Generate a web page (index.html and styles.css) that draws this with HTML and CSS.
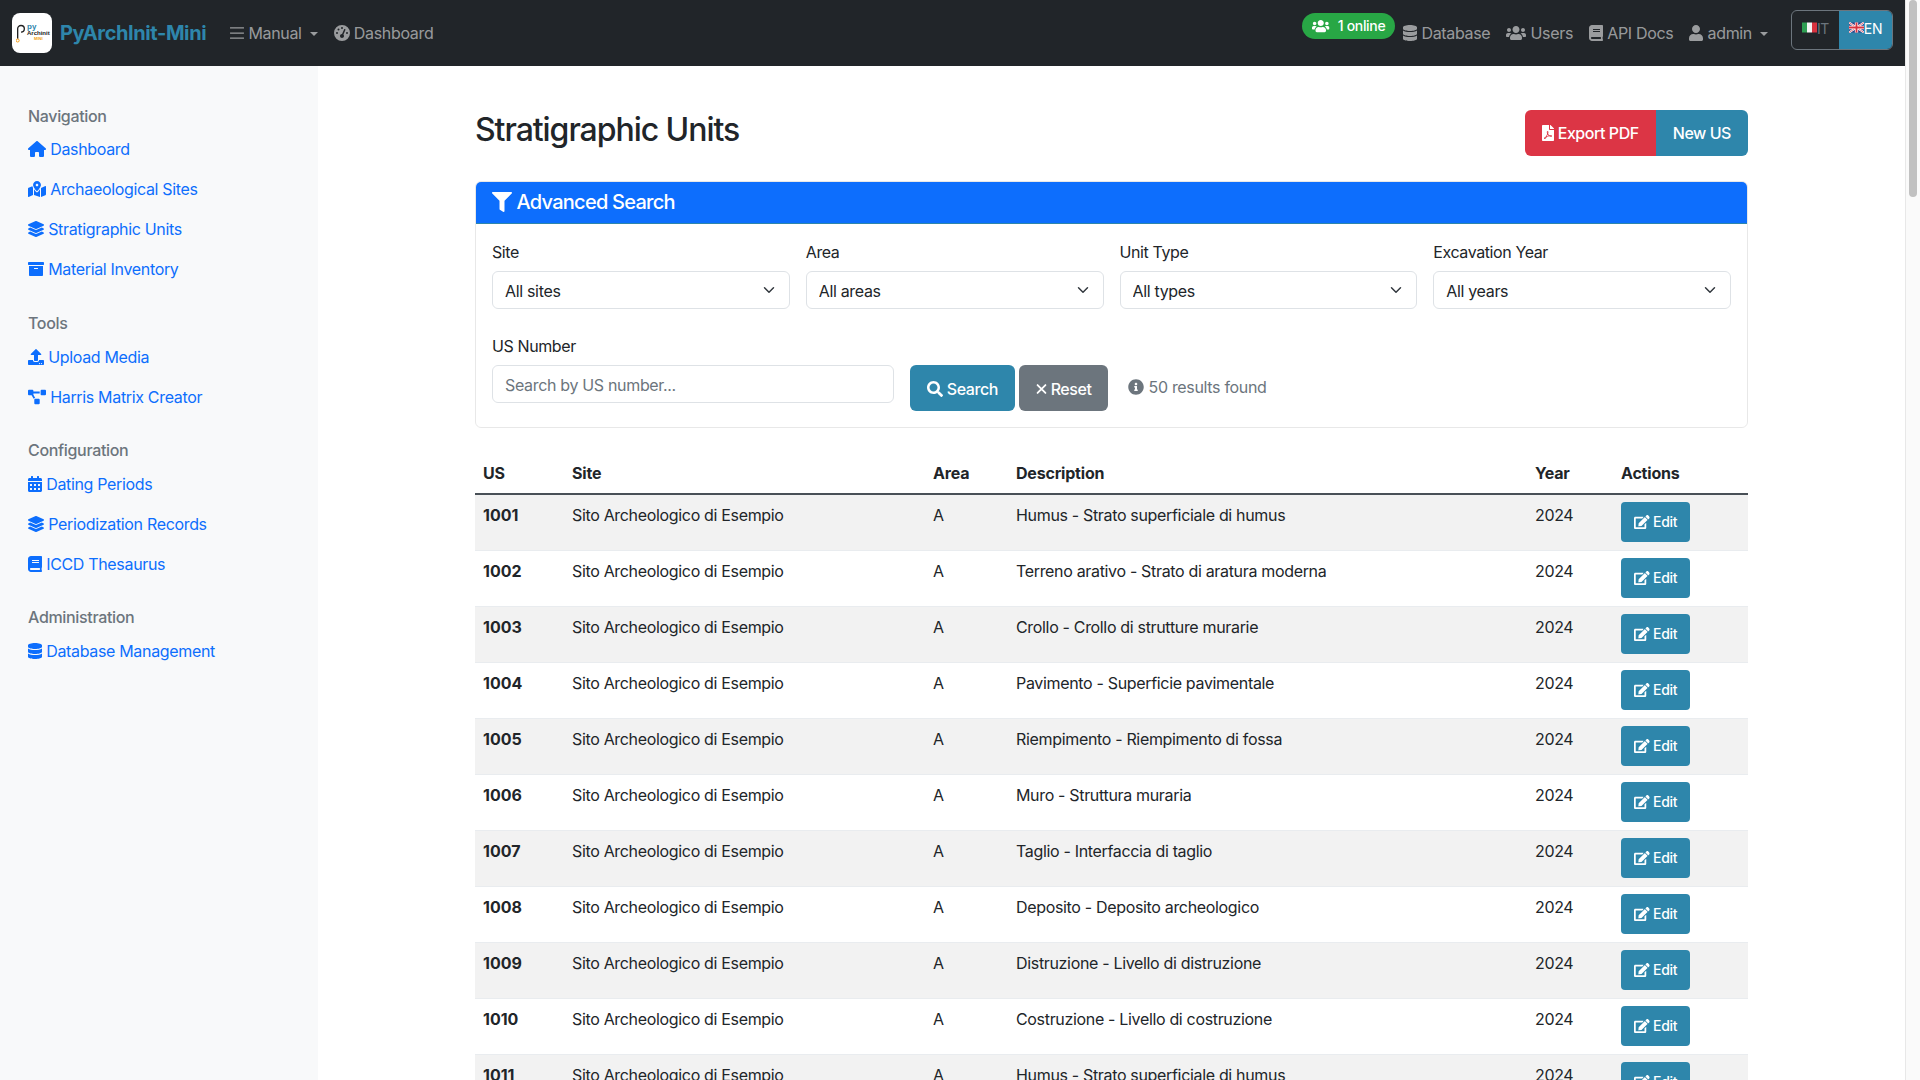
FILE: index.html
```html
<!DOCTYPE html>
<html lang="en">
<head>
    <meta charset="UTF-8">
    <meta name="viewport" content="width=device-width, initial-scale=1.0">
    <title>Stratigraphic Units - PyArchInit-Mini</title>
    <link rel="stylesheet" href="styles.css">
</head>
<body>
<svg class="sprite" xmlns="http://www.w3.org/2000/svg">
    <symbol id="i-home" viewBox="0 0 576 512"><path d="M575.8 255.5c0 18-15 32.1-32 32.1h-32l.7 160.2c0 2.7-.2 5.4-.5 8.1V472c0 22.1-17.9 40-40 40H456c-1.1 0-2.2 0-3.3-.1c-1.4 .1-2.8 .1-4.2 .1H416 392c-22.1 0-40-17.9-40-40V448 384c0-17.7-14.3-32-32-32H256c-17.7 0-32 14.3-32 32v64 24c0 22.1-17.9 40-40 40H160 128.1c-1.5 0-3-.1-4.5-.2c-1.2 .1-2.4 .2-3.6 .2H104c-22.1 0-40-17.9-40-40V360c0-.9 0-1.9 .1-2.8V287.6H32c-18 0-32-14-32-32.1c0-9 3-17 10-24L266.4 8c7-7 15-8 22-8s15 2 21 7L564.8 231.5c8 7 12 15 11 24z"/></symbol>
    <symbol id="i-map" viewBox="0 0 576 512"><path d="M288 0c-69.59 0-126 56.41-126 126 0 56.26 82.35 158.8 113.9 196.02 6.39 7.54 17.82 7.54 24.2 0C331.65 284.8 414 182.26 414 126 414 56.41 357.59 0 288 0zm0 168c-23.2 0-42-18.8-42-42s18.8-42 42-42 42 18.8 42 42-18.8 42-42 42zM20.12 215.95A32.006 32.006 0 0 0 0 245.66v250.32c0 11.32 11.43 19.06 21.94 14.86L160 448V214.92c-8.84-15.98-16.07-31.54-21.25-46.42L20.12 215.95zM288 359.67c-14.07 0-27.38-6.18-36.51-16.96-19.66-23.2-40.57-49.62-59.49-76.72V448l192 64V266c-18.92 27.09-39.82 53.52-59.49 76.72-9.13 10.77-22.44 16.95-36.51 16.95zm266.06-198.51L416 224v288l139.88-55.95A31.996 31.996 0 0 0 576 426.34V176.02c0-11.32-11.43-19.06-21.94-14.86z"/></symbol>
    <symbol id="i-layers" viewBox="0 0 512 512"><path d="M12.41 148.02l232.94 105.67c6.8 3.09 14.49 3.09 21.29 0l232.94-105.67c16.55-7.51 16.55-32.52 0-40.03L266.65 2.31a25.607 25.607 0 0 0-21.29 0L12.41 107.98c-16.55 7.51-16.55 32.53 0 40.04zm487.18 88.28l-58.09-26.33-161.64 73.27c-7.56 3.43-15.59 5.17-23.86 5.17s-16.29-1.74-23.86-5.17L70.51 209.97l-58.1 26.33c-16.55 7.5-16.55 32.5 0 40l232.94 105.59c6.8 3.08 14.49 3.08 21.29 0L499.59 276.3c16.55-7.5 16.55-32.5 0-40zm0 127.8l-57.87-26.23-161.86 73.37c-7.56 3.43-15.59 5.17-23.86 5.17s-16.29-1.74-23.86-5.17L70.29 337.87 12.41 364.1c-16.55 7.5-16.55 32.5 0 40l232.94 105.59c6.8 3.08 14.49 3.08 21.29 0L499.59 404.1c16.55-7.5 16.55-32.5 0-40z"/></symbol>
    <symbol id="i-archive" viewBox="0 0 512 512"><path d="M32 448c0 17.7 14.3 32 32 32h384c17.7 0 32-14.3 32-32V160H32v288zm160-212c0-6.6 5.4-12 12-12h104c6.6 0 12 5.4 12 12v8c0 6.6-5.4 12-12 12H204c-6.6 0-12-5.4-12-12v-8zM480 32H32C14.3 32 0 46.3 0 64v48c0 8.8 7.2 16 16 16h480c8.8 0 16-7.2 16-16V64c0-17.7-14.3-32-32-32z"/></symbol>
    <symbol id="i-upload" viewBox="0 0 512 512"><path d="M296 384h-80c-13.3 0-24-10.7-24-24V192h-87.7c-17.8 0-26.7-21.5-14.1-34.1L242.3 5.7c7.5-7.5 19.8-7.5 27.3 0l152.2 152.2c12.6 12.6 3.7 34.1-14.1 34.1H320v168c0 13.3-10.7 24-24 24zm216-8v112c0 13.3-10.7 24-24 24H24c-13.3 0-24-10.7-24-24V376c0-13.3 10.7-24 24-24h136v8c0 30.9 25.1 56 56 56h80c30.9 0 56-25.1 56-56v-8h136c13.3 0 24 10.7 24 24zm-124 88c0-11-9-20-20-20s-20 9-20 20 9 20 20 20 20-9 20-20zm64 0c0-11-9-20-20-20s-20 9-20 20 9 20 20 20 20-9 20-20z"/></symbol>
    <symbol id="i-diagram" viewBox="0 0 640 512"><path d="M384 320H256c-17.67 0-32 14.33-32 32v128c0 17.67 14.33 32 32 32h128c17.67 0 32-14.33 32-32V352c0-17.67-14.33-32-32-32zM192 32c0-17.67-14.33-32-32-32H32C14.33 0 0 14.33 0 32v128c0 17.67 14.33 32 32 32h95.72l73.16 128.04C211.98 300.98 232.4 288 256 288h.28L192 175.51V128h224V64H192V32zM608 0H480c-17.67 0-32 14.33-32 32v128c0 17.67 14.33 32 32 32h128c17.67 0 32-14.33 32-32V32c0-17.67-14.33-32-32-32z"/></symbol>
    <symbol id="i-calendar" viewBox="0 0 448 512"><path d="M0 464c0 26.5 21.5 48 48 48h352c26.5 0 48-21.5 48-48V192H0v272zm320-196c0-6.6 5.4-12 12-12h40c6.6 0 12 5.4 12 12v40c0 6.6-5.4 12-12 12h-40c-6.6 0-12-5.4-12-12v-40zm0 128c0-6.6 5.4-12 12-12h40c6.6 0 12 5.4 12 12v40c0 6.6-5.4 12-12 12h-40c-6.6 0-12-5.4-12-12v-40zM192 268c0-6.6 5.4-12 12-12h40c6.6 0 12 5.4 12 12v40c0 6.6-5.4 12-12 12h-40c-6.6 0-12-5.4-12-12v-40zm0 128c0-6.6 5.4-12 12-12h40c6.6 0 12 5.4 12 12v40c0 6.6-5.4 12-12 12h-40c-6.6 0-12-5.4-12-12v-40zM64 268c0-6.6 5.4-12 12-12h40c6.6 0 12 5.4 12 12v40c0 6.6-5.4 12-12 12H76c-6.6 0-12-5.4-12-12v-40zm0 128c0-6.6 5.4-12 12-12h40c6.6 0 12 5.4 12 12v40c0 6.6-5.4 12-12 12H76c-6.6 0-12-5.4-12-12v-40zM400 64h-48V16c0-8.8-7.2-16-16-16h-32c-8.8 0-16 7.2-16 16v48H160V16c0-8.8-7.2-16-16-16h-32c-8.8 0-16 7.2-16 16v48H48C21.5 64 0 85.5 0 112v48h448v-48c0-26.5-21.5-48-48-48z"/></symbol>
    <symbol id="i-book" viewBox="0 0 448 512"><path d="M448 360V24c0-13.3-10.7-24-24-24H96C43 0 0 43 0 96v320c0 53 43 96 96 96h328c13.3 0 24-10.7 24-24v-16c0-7.5-3.5-14.3-8.9-18.7-4.2-15.4-4.2-59.3 0-74.7 5.4-4.3 8.9-11.1 8.9-18.6zM128 134c0-3.3 2.7-6 6-6h212c3.3 0 6 2.7 6 6v20c0 3.3-2.7 6-6 6H134c-3.3 0-6-2.7-6-6v-20zm0 64c0-3.3 2.7-6 6-6h212c3.3 0 6 2.7 6 6v20c0 3.3-2.7 6-6 6H134c-3.3 0-6-2.7-6-6v-20zm253.4 250H96c-17.7 0-32-14.3-32-32 0-17.6 14.4-32 32-32h285.4c-1.9 17.1-1.9 46.9 0 64z"/></symbol>
    <symbol id="i-database" viewBox="0 0 448 512"><path d="M448 73.143v45.714C448 159.143 347.667 192 224 192S0 159.143 0 118.857V73.143C0 32.857 100.333 0 224 0s224 32.857 224 73.143zM448 176v102.857C448 319.143 347.667 352 224 352S0 319.143 0 278.857V176c48.125 33.143 136.208 48.572 224 48.572S399.874 209.143 448 176zm0 160v102.857C448 479.143 347.667 512 224 512S0 479.143 0 438.857V336c48.125 33.143 136.208 48.572 224 48.572S399.874 369.143 448 336z"/></symbol>
    <symbol id="i-user" viewBox="0 0 448 512"><path d="M224 256c70.7 0 128-57.3 128-128S294.7 0 224 0 96 57.3 96 128s57.3 128 128 128zm89.6 32h-16.7c-22.2 10.2-46.9 16-72.9 16s-50.6-5.8-72.9-16h-16.7C60.2 288 0 348.2 0 422.4V464c0 26.5 21.5 48 48 48h352c26.5 0 48-21.5 48-48v-41.6c0-74.2-60.2-134.4-134.4-134.4z"/></symbol>
    <symbol id="i-users" viewBox="0 0 640 512"><path d="M96 224c35.3 0 64-28.7 64-64s-28.7-64-64-64-64 28.7-64 64 28.7 64 64 64zm448 0c35.3 0 64-28.7 64-64s-28.7-64-64-64-64 28.7-64 64 28.7 64 64 64zm32 32h-64c-17.6 0-33.5 7.1-45.1 18.6 40.3 22.1 68.9 62 75.1 109.4h66c17.7 0 32-14.3 32-32v-32c0-35.3-28.7-64-64-64zm-256 0c61.9 0 112-50.1 112-112S381.9 32 320 32 208 82.1 208 144s50.1 112 112 112zm76.8 32h-8.3c-20.8 10-43.9 16-68.5 16s-47.6-6-68.5-16h-8.3C179.6 288 128 339.6 128 403.2V432c0 26.5 21.5 48 48 48h288c26.5 0 48-21.5 48-48v-28.8c0-63.6-51.6-115.2-115.2-115.2zm-223.7-13.4C161.5 263.1 145.6 256 128 256H64c-35.3 0-64 28.7-64 64v32c0 17.7 14.3 32 32 32h65.9c6.3-47.4 34.9-87.3 75.2-109.4z"/></symbol>
    <symbol id="i-bars" viewBox="0 0 448 512"><path d="M10 72h428a10 10 0 0 1 10 10v20a10 10 0 0 1-10 10H10a10 10 0 0 1-10-10V82a10 10 0 0 1 10-10zm0 164h428a10 10 0 0 1 10 10v20a10 10 0 0 1-10 10H10a10 10 0 0 1-10-10v-20a10 10 0 0 1 10-10zm0 164h428a10 10 0 0 1 10 10v20a10 10 0 0 1-10 10H10a10 10 0 0 1-10-10v-20a10 10 0 0 1 10-10z"/></symbol>
    <symbol id="i-gauge" viewBox="0 0 512 512"><path d="M0 256a256 256 0 1 1 512 0A256 256 0 1 1 0 256zM288 96a32 32 0 1 0 -64 0 32 32 0 1 0 64 0zM256 416c35.3 0 64-28.7 64-64c0-17.4-6.9-33.1-18.1-44.6L366 161.7c5.3-12.1-.2-26.3-12.3-31.6s-26.3 .2-31.6 12.3L257.9 288c-.6 0-1.3 0-1.9 0c-35.3 0-64 28.7-64 64s28.7 64 64 64zM176 144a32 32 0 1 0 -64 0 32 32 0 1 0 64 0zM96 288a32 32 0 1 0 0-64 32 32 0 1 0 0 64zm352-32a32 32 0 1 0 -64 0 32 32 0 1 0 64 0z"/></symbol>
    <symbol id="i-filter" viewBox="0 0 512 512"><path d="M487.976 0H24.028C2.71 0-8.047 25.866 7.058 40.971L192 225.941V432c0 7.831 3.821 15.17 10.237 19.662l80 55.98C298.02 518.69 320 507.493 320 487.98V225.941l184.947-184.97C520.021 25.896 509.338 0 487.976 0z"/></symbol>
    <symbol id="i-search" viewBox="0 0 512 512"><path d="M505 442.7L405.3 343c-4.5-4.5-10.6-7-17-7H372c27.6-35.3 44-79.7 44-128C416 93.1 322.9 0 208 0S0 93.1 0 208s93.1 208 208 208c48.3 0 92.7-16.4 128-44v16.3c0 6.4 2.5 12.5 7 17l99.7 99.7c9.4 9.4 24.6 9.4 33.9 0l28.3-28.3c9.4-9.4 9.4-24.6.1-34zM208 336c-70.7 0-128-57.2-128-128 0-70.7 57.2-128 128-128 70.7 0 128 57.2 128 128 0 70.7-57.2 128-128 128z"/></symbol>
    <symbol id="i-times" viewBox="0 0 352 512"><path d="M50 130L302 382M302 130L50 382" fill="none" stroke="currentColor" stroke-width="58" stroke-linecap="round"/></symbol>
    <symbol id="i-info" viewBox="0 0 512 512"><path d="M256 8C119.043 8 8 119.083 8 256c0 136.997 111.043 248 248 248s248-111.003 248-248C504 119.083 392.957 8 256 8zm0 110c23.196 0 42 18.804 42 42s-18.804 42-42 42-42-18.804-42-42 18.804-42 42-42zm56 254c0 6.627-5.373 12-12 12h-88c-6.627 0-12-5.373-12-12v-24c0-6.627 5.373-12 12-12h12v-64h-12c-6.627 0-12-5.373-12-12v-24c0-6.627 5.373-12 12-12h64c6.627 0 12 5.373 12 12v100h12c6.627 0 12 5.373 12 12v24z"/></symbol>
    <symbol id="i-pdf" viewBox="0 0 384 512"><path d="M181.9 256.1c-5-16-4.9-46.9-2-46.9 8.4 0 7.6 36.9 2 46.9zm-1.7 47.2c-7.7 20.2-17.3 43.3-28.4 62.7 18.3-7 39-17.2 62.9-21.9-12.7-9.6-24.9-23.4-34.5-40.8zM86.1 428.1c0 .8 13.2-5.4 34.9-40.2-6.7 6.3-29.1 24.5-34.9 40.2zM248 160h136v328c0 13.3-10.7 24-24 24H24c-13.3 0-24-10.7-24-24V24C0 10.7 10.7 0 24 0h200v136c0 13.2 10.8 24 24 24zm-8 171.8c-20-12.2-33.3-29-42.7-53.8 4.5-18.5 11.6-46.6 6.2-64.2-4.7-29.4-42.4-26.5-47.8-6.8-5 18.3-.4 44.1 8.1 77-11.6 27.6-28.7 64.6-40.8 85.8-.1 0-.1.1-.2.1-27.1 13.9-73.6 44.5-54.5 68 5.6 6.9 16 10 21.5 10 17.9 0 35.7-18 61.1-61.8 25.8-8.5 54.1-19.1 79-23.2 21.7 11.8 47.1 19.5 64 19.5 29.2 0 31.2-32 19.7-43.4-13.9-13.6-54.3-9.7-73.6-7.2zM377 105L279 7c-4.5-4.5-10.6-7-17-7h-6v128h128v-6.1c0-6.3-2.5-12.4-7-16.9zm-74.1 255.3c4.1-2.7-2.5-11.9-42.8-9 37.1 15.8 42.8 9 42.8 9z"/></symbol>
    <symbol id="i-edit" viewBox="0 0 576 512"><path d="M402.6 83.2l90.2 90.2c3.8 3.8 3.8 10 0 13.8L274.4 405.6l-92.8 10.3c-12.4 1.4-22.9-9.1-21.5-21.5l10.3-92.8L388.8 83.2c3.8-3.8 10-3.8 13.8 0zm162-22.9l-48.8-48.8c-15.2-15.2-39.9-15.2-55.2 0l-35.4 35.4c-3.8 3.8-3.8 10 0 13.8l90.2 90.2c3.8 3.8 10 3.8 13.8 0l35.4-35.4c15.2-15.3 15.2-40 0-55.2zM384 346.2V448H64V128h229.8c3.2 0 6.2-1.3 8.5-3.5l40-40c7.6-7.6 2.2-20.5-8.5-20.5H48C21.5 64 0 85.5 0 112v352c0 26.5 21.5 48 48 48h352c26.5 0 48-21.5 48-48V306.2c0-10.7-12.9-16-20.5-8.5l-40 40c-2.2 2.3-3.5 5.3-3.5 8.5z"/></symbol>
</svg>

<div class="window">
    <div class="page">
        <nav class="topbar">
            <a class="brand" href="#">
                <span class="logo">
                    <svg class="logo-p" viewBox="0 0 12 24"><path d="M2 19V7a4 4 0 1 1 4 4" fill="none" stroke="#222" stroke-width="1.6"/><circle cx="2" cy="21" r="1.8" fill="none" stroke="#f39c12" stroke-width="1.2"/></svg>
                    <span class="logo-text">
                        <span class="logo-py">py</span>
                        <span class="logo-arch">Archinit</span>
                        <span class="logo-mini">MINI</span>
                    </span>
                </span>
                <span class="brand-name">PyArchInit-Mini</span>
            </a>
            <a class="nav-link" href="#"><svg class="ic w448"><use href="#i-bars"/></svg> Manual<span class="caret"></span></a>
            <a class="nav-link" href="#"><svg class="ic w512"><use href="#i-gauge"/></svg> Dashboard</a>

            <div class="nav-right">
                <span class="online"><svg class="ic w640"><use href="#i-users"/></svg><span>1 online</span></span>
                <a class="nav-link" href="#"><svg class="ic w448"><use href="#i-database"/></svg> Database</a>
                <a class="nav-link" href="#"><svg class="ic w640"><use href="#i-users"/></svg> Users</a>
                <a class="nav-link" href="#"><svg class="ic w448"><use href="#i-book"/></svg> API Docs</a>
                <a class="nav-link" href="#"><svg class="ic w448"><use href="#i-user"/></svg> admin<span class="caret"></span></a>
                <div class="lang">
                    <a class="lang-btn lang-it" href="#">
                        <svg class="flag" viewBox="0 0 18 12"><rect width="6" height="12" fill="#2e9e52"/><rect x="6" width="6" height="12" fill="#f4f4f4"/><rect x="12" width="6" height="12" fill="#d8333f"/></svg>IT
                    </a>
                    <a class="lang-btn lang-on" href="#">
                        <svg class="flag" viewBox="0 0 18 12"><rect width="18" height="12" fill="#2b3f86"/><path d="M0 0l18 12M18 0L0 12" stroke="#fff" stroke-width="2.4"/><path d="M0 0l18 12M18 0L0 12" stroke="#d8333f" stroke-width=".8"/><path d="M9 0v12M0 6h18" stroke="#fff" stroke-width="4"/><path d="M9 0v12M0 6h18" stroke="#d8333f" stroke-width="2.2"/></svg>EN
                    </a>
                </div>
            </div>
        </nav>

        <div class="layout">
            <aside class="sidebar">
                <div class="side-group">
                    <h6>Navigation</h6>
                    <a href="#"><svg class="ic w576"><use href="#i-home"/></svg> Dashboard</a>
                    <a href="#"><svg class="ic w576"><use href="#i-map"/></svg> Archaeological Sites</a>
                    <a href="#"><svg class="ic w512"><use href="#i-layers"/></svg> Stratigraphic Units</a>
                    <a href="#"><svg class="ic w512"><use href="#i-archive"/></svg> Material Inventory</a>
                </div>
                <div class="side-group">
                    <h6>Tools</h6>
                    <a href="#"><svg class="ic w512"><use href="#i-upload"/></svg> Upload Media</a>
                    <a href="#"><svg class="ic w576"><use href="#i-diagram"/></svg> Harris Matrix Creator</a>
                </div>
                <div class="side-group">
                    <h6>Configuration</h6>
                    <a href="#"><svg class="ic w448"><use href="#i-calendar"/></svg> Dating Periods</a>
                    <a href="#"><svg class="ic w512"><use href="#i-layers"/></svg> Periodization Records</a>
                    <a href="#"><svg class="ic w448"><use href="#i-book"/></svg> ICCD Thesaurus</a>
                </div>
                <div class="side-group">
                    <h6>Administration</h6>
                    <a href="#"><svg class="ic w448"><use href="#i-database"/></svg> Database Management</a>
                </div>
            </aside>

            <main class="content">
                <div class="wrap">
                    <div class="title-row">
                        <h1>Stratigraphic Units</h1>
                        <div class="btn-group">
                            <a class="btn btn-red" href="#"><svg class="ic w384"><use href="#i-pdf"/></svg> Export PDF</a>
                            <a class="btn btn-teal" href="#">New US</a>
                        </div>
                    </div>

                    <section class="card">
                        <header class="card-head"><svg class="ic w512"><use href="#i-filter"/></svg> Advanced Search</header>
                        <form class="card-body">
                            <div class="filters">
                                <label>Site
                                    <select><option>All sites</option></select>
                                </label>
                                <label>Area
                                    <select><option>All areas</option></select>
                                </label>
                                <label>Unit Type
                                    <select><option>All types</option></select>
                                </label>
                                <label>Excavation Year
                                    <select><option>All years</option></select>
                                </label>
                            </div>
                            <div class="search-row">
                                <label class="us-field">US Number
                                    <input type="text" placeholder="Search by US number...">
                                </label>
                                <button class="btn btn-teal" type="button"><svg class="ic w512"><use href="#i-search"/></svg> Search</button>
                                <button class="btn btn-grey" type="button"><svg class="ic w352"><use href="#i-times"/></svg> Reset</button>
                                <span class="results"><svg class="ic w512"><use href="#i-info"/></svg> 50 results found</span>
                            </div>
                        </form>
                    </section>

                    <table class="units">
                        <thead>
                            <tr><th>US</th><th>Site</th><th>Area</th><th>Description</th><th>Year</th><th>Actions</th></tr>
                        </thead>
                        <tbody>
                            <tr><td class="us">1001</td><td>Sito Archeologico di Esempio</td><td>A</td><td>Humus - Strato superficiale di humus</td><td>2024</td><td><a class="btn-edit" href="#"><svg class="ic w576"><use href="#i-edit"/></svg> Edit</a></td></tr>
                            <tr><td class="us">1002</td><td>Sito Archeologico di Esempio</td><td>A</td><td>Terreno arativo - Strato di aratura moderna</td><td>2024</td><td><a class="btn-edit" href="#"><svg class="ic w576"><use href="#i-edit"/></svg> Edit</a></td></tr>
                            <tr><td class="us">1003</td><td>Sito Archeologico di Esempio</td><td>A</td><td>Crollo - Crollo di strutture murarie</td><td>2024</td><td><a class="btn-edit" href="#"><svg class="ic w576"><use href="#i-edit"/></svg> Edit</a></td></tr>
                            <tr><td class="us">1004</td><td>Sito Archeologico di Esempio</td><td>A</td><td>Pavimento - Superficie pavimentale</td><td>2024</td><td><a class="btn-edit" href="#"><svg class="ic w576"><use href="#i-edit"/></svg> Edit</a></td></tr>
                            <tr><td class="us">1005</td><td>Sito Archeologico di Esempio</td><td>A</td><td>Riempimento - Riempimento di fossa</td><td>2024</td><td><a class="btn-edit" href="#"><svg class="ic w576"><use href="#i-edit"/></svg> Edit</a></td></tr>
                            <tr><td class="us">1006</td><td>Sito Archeologico di Esempio</td><td>A</td><td>Muro - Struttura muraria</td><td>2024</td><td><a class="btn-edit" href="#"><svg class="ic w576"><use href="#i-edit"/></svg> Edit</a></td></tr>
                            <tr><td class="us">1007</td><td>Sito Archeologico di Esempio</td><td>A</td><td>Taglio - Interfaccia di taglio</td><td>2024</td><td><a class="btn-edit" href="#"><svg class="ic w576"><use href="#i-edit"/></svg> Edit</a></td></tr>
                            <tr><td class="us">1008</td><td>Sito Archeologico di Esempio</td><td>A</td><td>Deposito - Deposito archeologico</td><td>2024</td><td><a class="btn-edit" href="#"><svg class="ic w576"><use href="#i-edit"/></svg> Edit</a></td></tr>
                            <tr><td class="us">1009</td><td>Sito Archeologico di Esempio</td><td>A</td><td>Distruzione - Livello di distruzione</td><td>2024</td><td><a class="btn-edit" href="#"><svg class="ic w576"><use href="#i-edit"/></svg> Edit</a></td></tr>
                            <tr><td class="us">1010</td><td>Sito Archeologico di Esempio</td><td>A</td><td>Costruzione - Livello di costruzione</td><td>2024</td><td><a class="btn-edit" href="#"><svg class="ic w576"><use href="#i-edit"/></svg> Edit</a></td></tr>
                            <tr><td class="us">1011</td><td>Sito Archeologico di Esempio</td><td>A</td><td>Humus - Strato superficiale di humus</td><td>2024</td><td><a class="btn-edit" href="#"><svg class="ic w576"><use href="#i-edit"/></svg> Edit</a></td></tr>
                        </tbody>
                    </table>
                </div>
            </main>
        </div>
    </div>
    <div class="scrollbar"><div class="thumb"></div></div>
</div>
</body>
</html>
```

FILE: styles.css
```css
*{
    box-sizing:border-box;
}
html,body{
    margin:0;
    height:100%;
    overflow:hidden;
}
body{
    font-family:Inter,"Liberation Sans",sans-serif;
    font-size:16px;
    line-height:24px;
    letter-spacing:-0.33px;
    color:#212529;
    background-color:#fff;
}
a{
    text-decoration:none;
}
.sprite{
    display:none;
}
.ic{
    height:1em;
    fill:currentColor;
    display:inline-block;
    vertical-align:-0.125em;
}
.w352{width:.6875em;}
.w384{width:.75em;}
.w448{width:.875em;}
.w512{width:1em;}
.w576{width:1.125em;}
.w640{width:1.25em;}

/* page shell */
.window{
    display:flex;
    height:100vh;
}
.page{
    flex:1;
    min-width:0;
    display:flex;
    flex-direction:column;
}
.scrollbar{
    width:15px;
    background-color:#fafafa;
    border-left:1px solid #e8e8e8;
    padding:0 3px;
}
.thumb{
    width:8px;
    height:197px;
    background-color:#c1c1c1;
    border-radius:4px;
}

/* top bar */
.topbar{
    height:66px;
    flex:none;
    background-color:#212529;
    display:flex;
    align-items:center;
    padding:0 12px;
}
.brand{
    display:flex;
    align-items:center;
    gap:8px;
    margin-right:16px;
}
.brand-name{
    font-size:20px;
    font-weight:700;
    letter-spacing:-0.4px;
    color:#2e86ab;
    white-space:nowrap;
}
.logo{
    width:40px;
    height:40px;
    border-radius:8px;
    background-color:#fff;
    display:flex;
    align-items:center;
    padding-left:4px;
}
.logo-p{
    width:10px;
    height:20px;
    flex:none;
}
.logo-text{
    display:flex;
    flex-direction:column;
    align-items:center;
    font-family:"Liberation Sans",sans-serif;
    font-weight:700;
    letter-spacing:0;
    line-height:6px;
    margin-left:1px;
}
.logo-py{
    font-size:8px;
    color:#2e86ab;
    align-self:flex-start;
}
.logo-arch{
    font-size:6px;
    color:#222;
}
.logo-mini{
    font-size:4px;
    color:#f39c12;
}
.nav-link{
    color:rgba(255,255,255,.55);
    padding:8px;
    white-space:nowrap;
    display:inline-block;
}
.caret{
    display:inline-block;
    margin-left:8px;
    vertical-align:3px;
    border-top:4px solid;
    border-left:4px solid transparent;
    border-right:4px solid transparent;
}
.nav-right{
    margin-left:auto;
    display:flex;
    align-items:center;
}
.online{
    background-color:#28a745;
    color:#fff;
    font-size:14px;
    font-weight:500;
    line-height:20px;
    border-radius:13px;
    height:26px;
    padding:3px 10px;
    display:flex;
    align-items:center;
    gap:8px;
    margin-top:-14px;
}
.lang{
    display:flex;
    width:102px;
    height:40px;
    margin:-6px 0 0 15px;
    border:1px solid #6c757d;
    border-radius:6px;
    overflow:hidden;
}
.lang-btn{
    font-size:14px;
    color:#6c757d;
    display:flex;
    align-items:center;
    justify-content:center;
    padding-bottom:3px;
}
.lang-it{
    flex:0 0 47px;
}
.lang-on{
    flex:1;
    background-color:#2e86ab;
    color:#fff;
}
.flag{
    width:15px;
    height:11px;
    margin-top:-3px;
    flex:none;
}

/* sidebar */
.layout{
    flex:1;
    min-height:0;
    display:flex;
}
.sidebar{
    width:318px;
    flex:none;
    background-color:#f8f9fa;
    padding:38px 0 0 28px;
}
.side-group{
    margin-bottom:21px;
}
.side-group:first-child{
    margin-bottom:22px;
}
.side-group h6{
    margin:0 0 2px;
    font-size:16px;
    font-weight:500;
    line-height:24px;
    color:#6c757d;
}
.side-group:first-child h6{
    margin-bottom:1px;
}
.side-group a{
    display:block;
    color:#0d6efd;
    padding:8px 0;
}

/* main area */
.content{
    flex:1;
    min-width:0;
    overflow:hidden;
    padding-top:44px;
}
.wrap{
    width:1273px;
    margin:0 auto;
}
.title-row{
    display:flex;
    justify-content:space-between;
    align-items:center;
    margin-bottom:25px;
}
h1{
    margin:0 0 6px;
    font-size:32px;
    font-weight:500;
    line-height:38px;
    letter-spacing:-1.05px;
}
.btn-group{
    display:flex;
}
.btn-group .btn{
    border-radius:0;
}
.btn-group .btn:first-child{
    border-radius:6px 0 0 6px;
}
.btn-group .btn:last-child{
    border-radius:0 6px 6px 0;
}
.btn{
    font-family:inherit;
    font-size:16px;
    line-height:24px;
    font-weight:500;
    letter-spacing:-0.45px;
    color:#fff;
    height:46px;
    padding:10px 16px;
    border:1px solid transparent;
    border-radius:6px;
    white-space:nowrap;
    cursor:pointer;
}
.btn-red{
    background-color:#dc3545;
}
.btn-teal{
    background-color:#2e86ab;
}
.btn-grey{
    background-color:#6c757d;
}

/* search card */
.card{
    border:1px solid rgba(0,0,0,.09);
    border-radius:6px;
    overflow:hidden;
    height:247px;
}
.card-head{
    background-color:#0d6efd;
    color:#fff;
    font-size:20px;
    font-weight:500;
    line-height:24px;
    letter-spacing:-0.75px;
    height:42px;
    padding:8px 16px;
    border-bottom:1px solid #2e86ab;
}
.card-body{
    padding:16px;
}
.filters{
    display:grid;
    grid-template-columns:repeat(4,1fr);
    gap:16px;
    margin-bottom:25px;
}
label{
    display:block;
    line-height:24px;
    letter-spacing:-0.4px;
}
select,input{
    display:block;
    width:100%;
    height:38px;
    margin-top:7px;
    font-family:inherit;
    font-size:16px;
    letter-spacing:-0.33px;
    color:#212529;
    background-color:#fff;
    border:1px solid #dee2e6;
    border-radius:6px;
    padding:7px 12px 5px;
}
select{
    appearance:none;
    padding-right:36px;
    background-image:url("data:image/svg+xml,%3csvg xmlns='http://www.w3.org/2000/svg' viewBox='0 0 16 16'%3e%3cpath fill='none' stroke='%23343a40' stroke-linecap='round' stroke-linejoin='round' stroke-width='2' d='m2 5 6 6 6-6'/%3e%3c/svg%3e");
    background-repeat:no-repeat;
    background-position:right 12px center;
    background-size:16px 12px;
}
input::placeholder{
    color:#6c757d;
}
.search-row{
    display:flex;
    align-items:flex-start;
}
.us-field{
    width:402px;
    flex:none;
    margin-right:16px;
}
.search-row .btn{
    margin-top:31px;
    margin-right:4px;
    padding:11px 16px 9px;
}
.results{
    margin:41px 0 0 16px;
    color:#6c757d;
}

/* table */
.units{
    width:100%;
    margin-top:17px;
    border-collapse:collapse;
    table-layout:fixed;
}
.units th,.units td{
    padding:8px;
    text-align:left;
    vertical-align:top;
}
.units th{
    font-weight:700;
    letter-spacing:-0.2px;
    border-bottom:2px solid #495057;
    height:49px;
    vertical-align:bottom;
}
.units td{
    border-bottom:1px solid #e9ecef;
    height:56px;
}
.units tbody tr:nth-child(odd){
    background-color:#f2f2f2;
}
.units th:nth-child(1){width:89px;}
.units th:nth-child(2){width:361px;}
.units th:nth-child(3){width:83px;}
.units th:nth-child(4){width:519px;}
.units th:nth-child(5){width:86px;}
.units .us{
    font-weight:700;
    letter-spacing:0;
}
.btn-edit{
    display:block;
    width:69px;
    height:40px;
    margin-top:-1px;
    padding:8px 0 7px;
    text-align:center;
    font-size:14px;
    font-weight:500;
    line-height:24px;
    color:#fff;
    background-color:#2e86ab;
    border-radius:4px;
}
```
